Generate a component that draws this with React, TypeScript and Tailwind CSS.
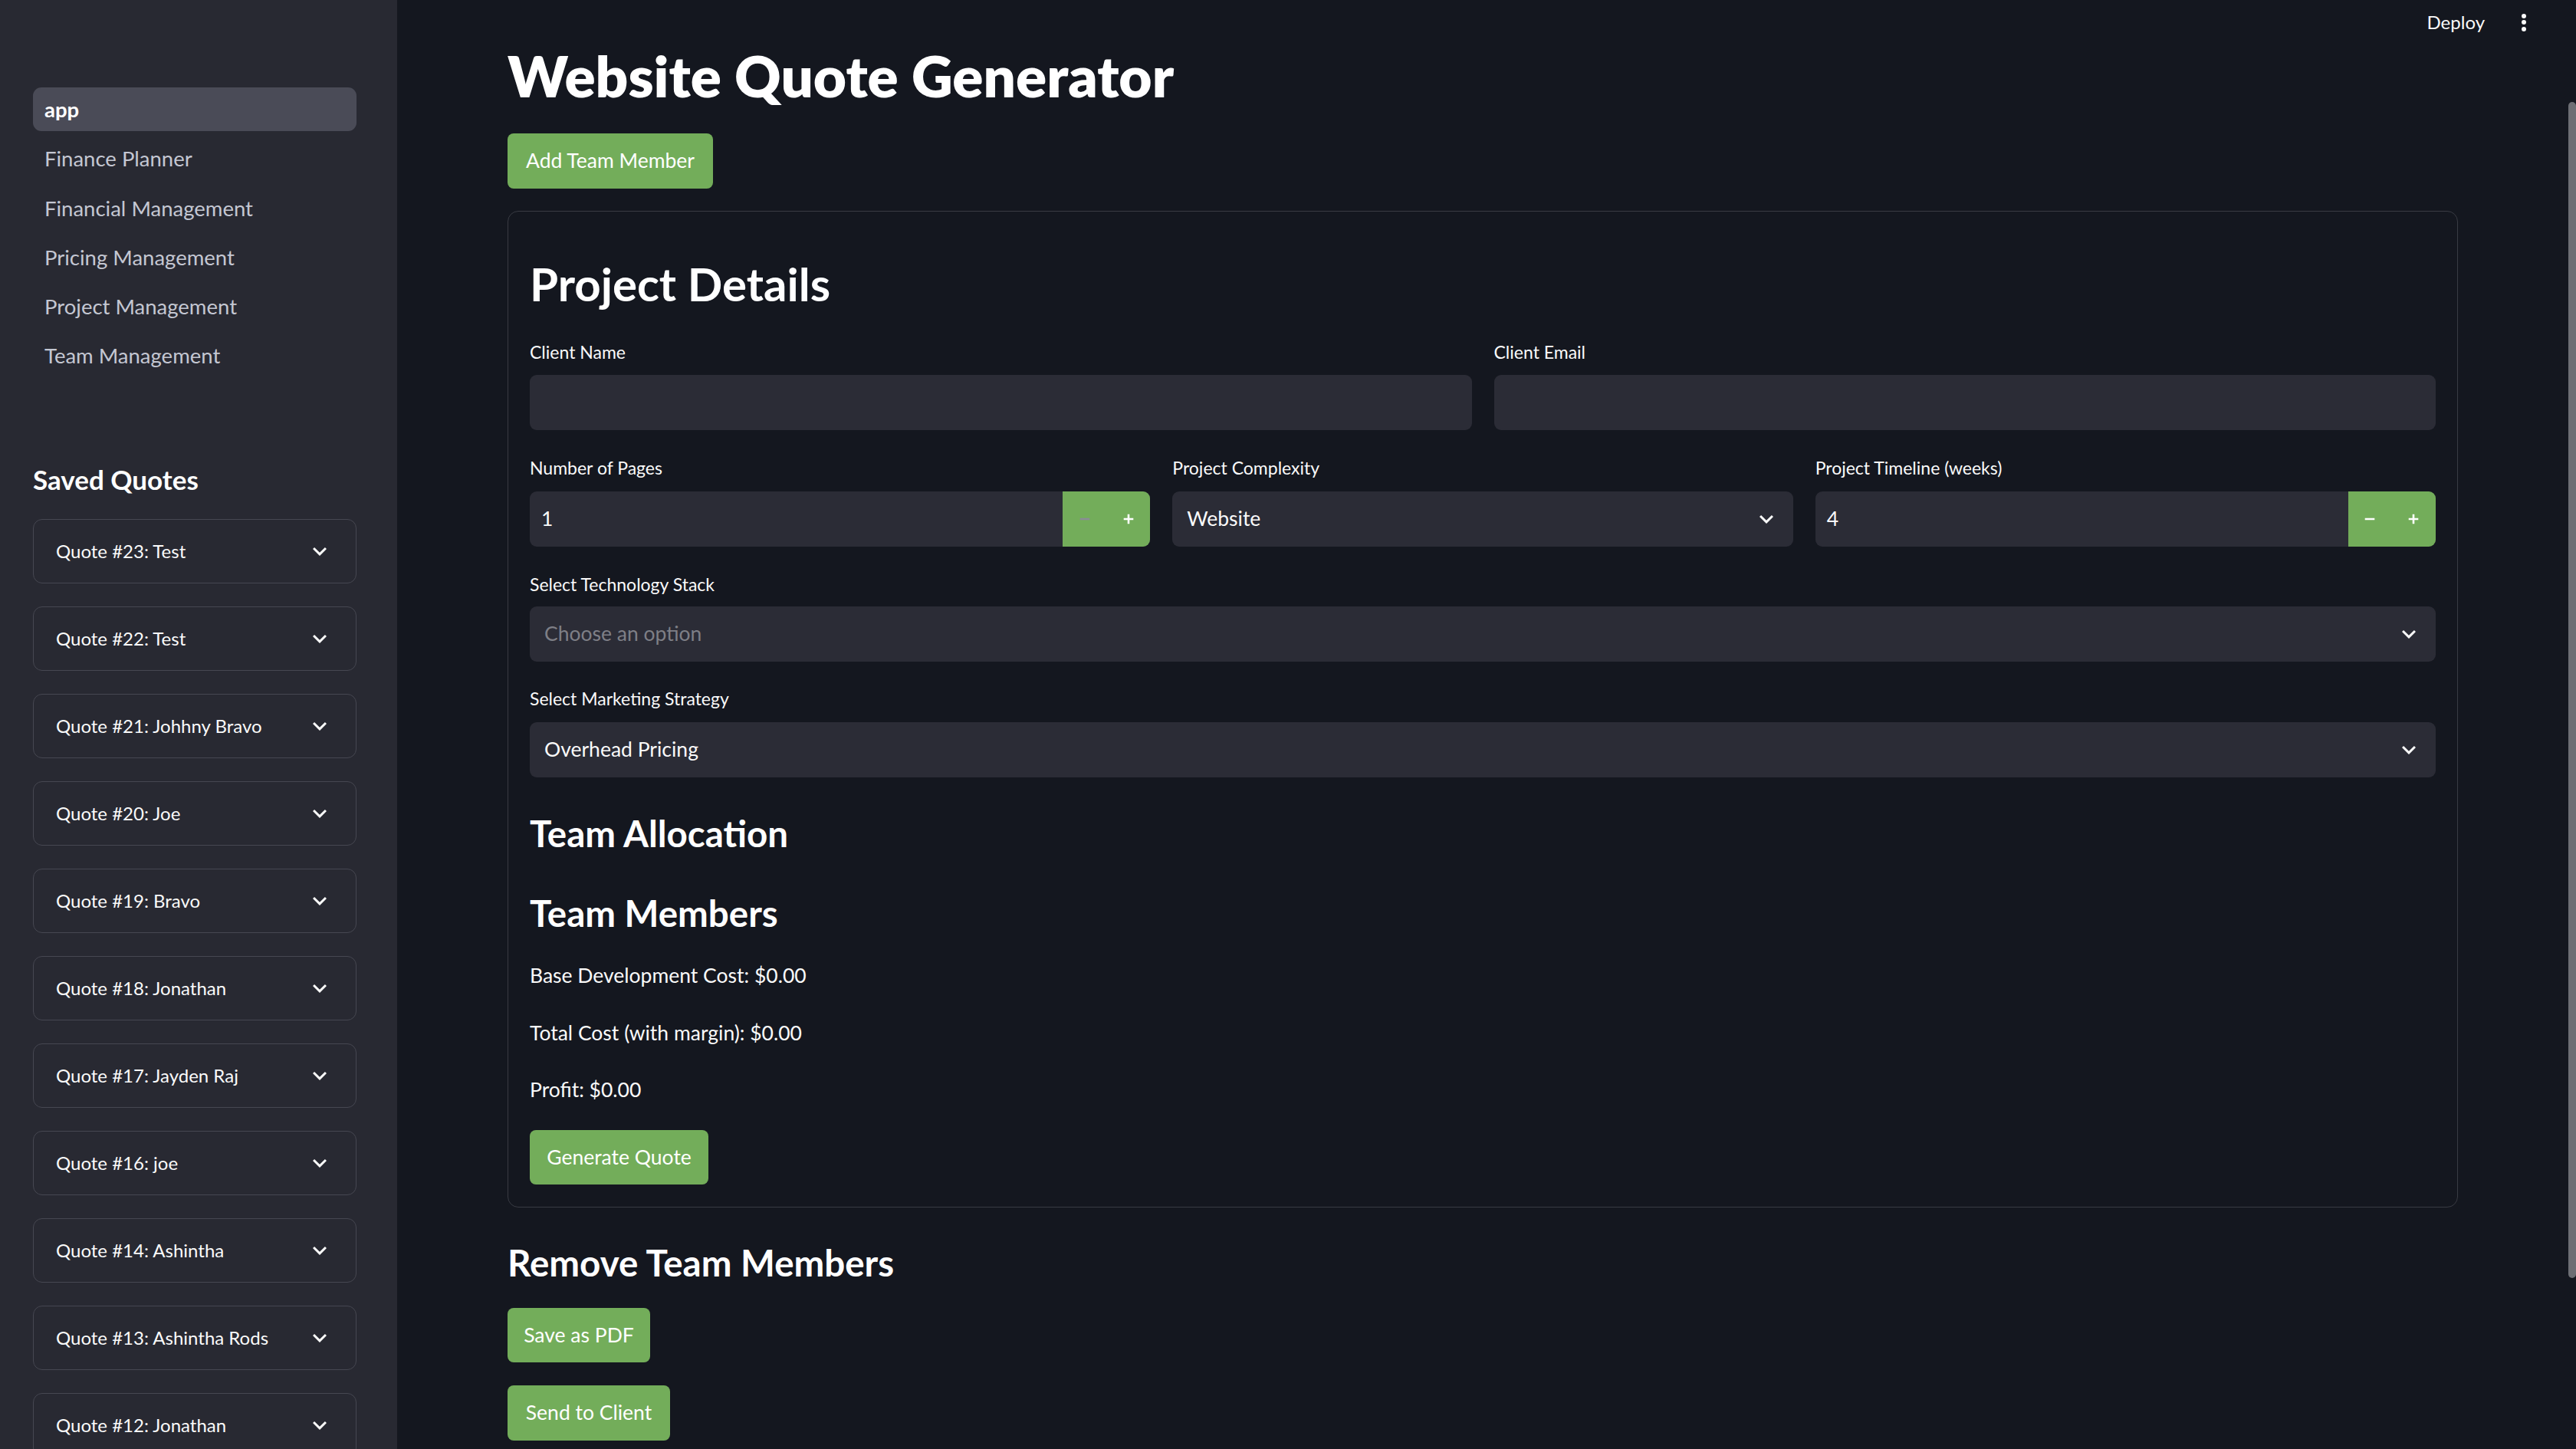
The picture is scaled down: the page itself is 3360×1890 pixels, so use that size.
import type { ReactNode } from 'react'

const nav = ['app', 'Finance Planner', 'Financial Management', 'Pricing Management', 'Project Management', 'Team Management']

const quotes = [
  'Quote #23: Test',
  'Quote #22: Test',
  'Quote #21: Johhny Bravo',
  'Quote #20: Joe',
  'Quote #19: Bravo',
  'Quote #18: Jonathan',
  'Quote #17: Jayden Raj',
  'Quote #16: joe',
  'Quote #14: Ashintha',
  'Quote #13: Ashintha Rods',
  'Quote #12: Jonathan',
]

function ExpandMore({ className }: { className?: string }) {
  return (
    <svg viewBox="0 0 24 24" className={className} fill="currentColor">
      <path d="M16.59 8.59 12 13.17 7.41 8.59 6 10l6 6 6-6z" />
    </svg>
  )
}

function Minus({ className }: { className?: string }) {
  return (
    <svg viewBox="0 0 14 14" className={className} stroke="currentColor" strokeWidth="2.6" strokeLinecap="square">
      <path d="M2 7h10" />
    </svg>
  )
}

function Plus({ className }: { className?: string }) {
  return (
    <svg viewBox="0 0 14 14" className={className} stroke="currentColor" strokeWidth="2.6" strokeLinecap="square">
      <path d="M2 7h10M7 2v10" />
    </svg>
  )
}

function Label({ children }: { children: ReactNode }) {
  return <div className="text-[23px] leading-[1.2] text-[#fafafa]">{children}</div>
}

function TextInput() {
  return <div className="mt-[15px] h-[72px] rounded-[9px] bg-[#2b2c36]" />
}

function NumberInput({ value, atMin }: { value: string; atMin?: boolean }) {
  return (
    <div className="mt-[16px] flex h-[72px] overflow-hidden rounded-[9px] bg-[#2b2c36]">
      <div className="flex flex-1 items-center pl-[15px] text-[26.5px] leading-[1.2]">{value}</div>
      <div className="flex w-[114px] bg-[#73ad5a]">
        <div className="flex flex-1 items-center justify-center">
          <Minus className={atMin ? 'h-[14px] w-[14px] text-[#8a8c96]' : 'h-[14px] w-[14px] text-white'} />
        </div>
        <div className="flex flex-1 items-center justify-center">
          <Plus className="h-[14px] w-[14px] text-white" />
        </div>
      </div>
    </div>
  )
}

function Select({ value, placeholder, gap = 'mt-[16px]' }: { value: string; placeholder?: boolean; gap?: string }) {
  return (
    <div className={`${gap} flex h-[72px] items-center justify-between rounded-[9px] bg-[#2b2c36] pl-[19px] pr-[17px]`}>
      <span className={placeholder ? 'text-[26.5px] leading-[1.2] text-[#7e7f86]' : 'text-[26.5px] leading-[1.2] text-[#fafafa]'}>{value}</span>
      <ExpandMore className="h-9 w-9 text-[#fafafa]" />
    </div>
  )
}

function Button({ children, width, height = 'h-[71px]', className = '' }: { children: ReactNode; width: string; height?: string; className?: string }) {
  return (
    <button className={`${width} ${height} ${className} flex items-center justify-center rounded-[8px] bg-[#73ad5a] text-[26.5px] leading-[1.2] text-white`}>
      {children}
    </button>
  )
}

export default function App() {
  return (
    <div className="relative flex h-[1890px] w-[3360px] overflow-hidden bg-[#14171f] font-[Lato,sans-serif] text-[#fafafa]">
      <aside className="flex w-[518px] shrink-0 flex-col bg-[#282932] pt-[114px]">
        <nav className="ml-[43px] flex w-[422px] flex-col gap-[7.3px]">
          {nav.map((item, i) => (
            <div
              key={item}
              className={
                i === 0
                  ? 'flex h-[57px] items-center rounded-[11px] bg-[#4a4b57] px-[15px] text-[27.5px] font-bold leading-[1.2] text-white'
                  : 'flex h-[57px] items-center rounded-[11px] px-[15px] text-[27.5px] leading-[1.2] text-[#c4c7d2]'
              }
            >
              {item}
            </div>
          ))}
        </nav>
        <div className="mt-[38px] h-px w-[508px] bg-[#4d4e57]" />
        <h3 className="ml-[43px] mt-[74px] text-[35px] font-bold leading-[1.2] text-white">Saved Quotes</h3>
        <div className="ml-[43px] mt-[31px] flex w-[422px] flex-col gap-[30px]">
          {quotes.map((q) => (
            <div key={q} className="flex h-[84px] shrink-0 items-center justify-between rounded-[12px] border border-[#464751] pl-[29px] pr-[29px]">
              <span className="text-[24px] leading-[1.2] text-[#fafafa]">{q}</span>
              <ExpandMore className="h-9 w-9 text-[#fafafa]" />
            </div>
          ))}
        </div>
      </aside>

      <main className="ml-[144px] flex w-[2544px] shrink-0 flex-col pt-[54px]">
        <h1 className="text-[74.5px] font-extrabold leading-[1.2] text-white">Website Quote Generator</h1>
        <Button width="w-[268px]" height="h-[72px]" className="mt-[31px]">Add Team Member</Button>

        <section className="mt-[29px] flex flex-col rounded-[14px] border border-[#393b43] px-[28px] pb-[29px] pt-[58px]">
          <h2 className="text-[60px] font-bold leading-[1.2] text-white">Project Details</h2>

          <div className="mt-[40px] grid grid-cols-2 gap-x-[29px]">
            <div>
              <Label>Client Name</Label>
              <TextInput />
            </div>
            <div>
              <Label>Client Email</Label>
              <TextInput />
            </div>
          </div>

          <div className="mt-[36px] grid grid-cols-3 gap-x-[29px]">
            <div>
              <Label>Number of Pages</Label>
              <NumberInput value="1" atMin />
            </div>
            <div>
              <Label>Project Complexity</Label>
              <Select value="Website" />
            </div>
            <div>
              <Label>Project Timeline (weeks)</Label>
              <NumberInput value="4" />
            </div>
          </div>

          <div className="mt-[36px]">
            <Label>Select Technology Stack</Label>
            <Select value="Choose an option" placeholder gap="mt-[15px]" />
          </div>

          <div className="mt-[35px]">
            <Label>Select Marketing Strategy</Label>
            <Select value="Overhead Pricing" />
          </div>

          <h3 className="mt-[44px] text-[47.5px] font-bold leading-[1.2] text-white">Team Allocation</h3>
          <h3 className="mt-[47px] text-[47.5px] font-bold leading-[1.2] text-white">Team Members</h3>

          <p className="mt-[38px] text-[26.5px] leading-[1.2]">Base Development Cost: $0.00</p>
          <p className="mt-[43px] text-[26.5px] leading-[1.2]">Total Cost (with margin): $0.00</p>
          <p className="mt-[43px] text-[26.5px] leading-[1.2]">Profit: $0.00</p>

          <Button width="w-[233px]" className="mt-[36px]">Generate Quote</Button>
        </section>

        <h3 className="mt-[43px] text-[47.5px] font-bold leading-[1.2] text-white">Remove Team Members</h3>
        <Button width="w-[186px]" className="mt-[31px]">Save as PDF</Button>
        <Button width="w-[212px]" height="h-[72px]" className="mt-[30px]">Send to Client</Button>
      </main>

      <header className="absolute right-[65px] top-[15px] flex items-center gap-[48px]">
        <span className="text-[24px] leading-[1.2] text-[#fafafa]">Deploy</span>
        <div className="flex flex-col gap-[2.5px]">
          <span className="h-[6px] w-[6px] rounded-full bg-[#fafafa]" />
          <span className="h-[6px] w-[6px] rounded-full bg-[#fafafa]" />
          <span className="h-[6px] w-[6px] rounded-full bg-[#fafafa]" />
        </div>
      </header>

      <div className="absolute right-0 top-[133px] h-[1534px] w-[10px] rounded-full bg-[#6d6e74]" />
    </div>
  )
}
